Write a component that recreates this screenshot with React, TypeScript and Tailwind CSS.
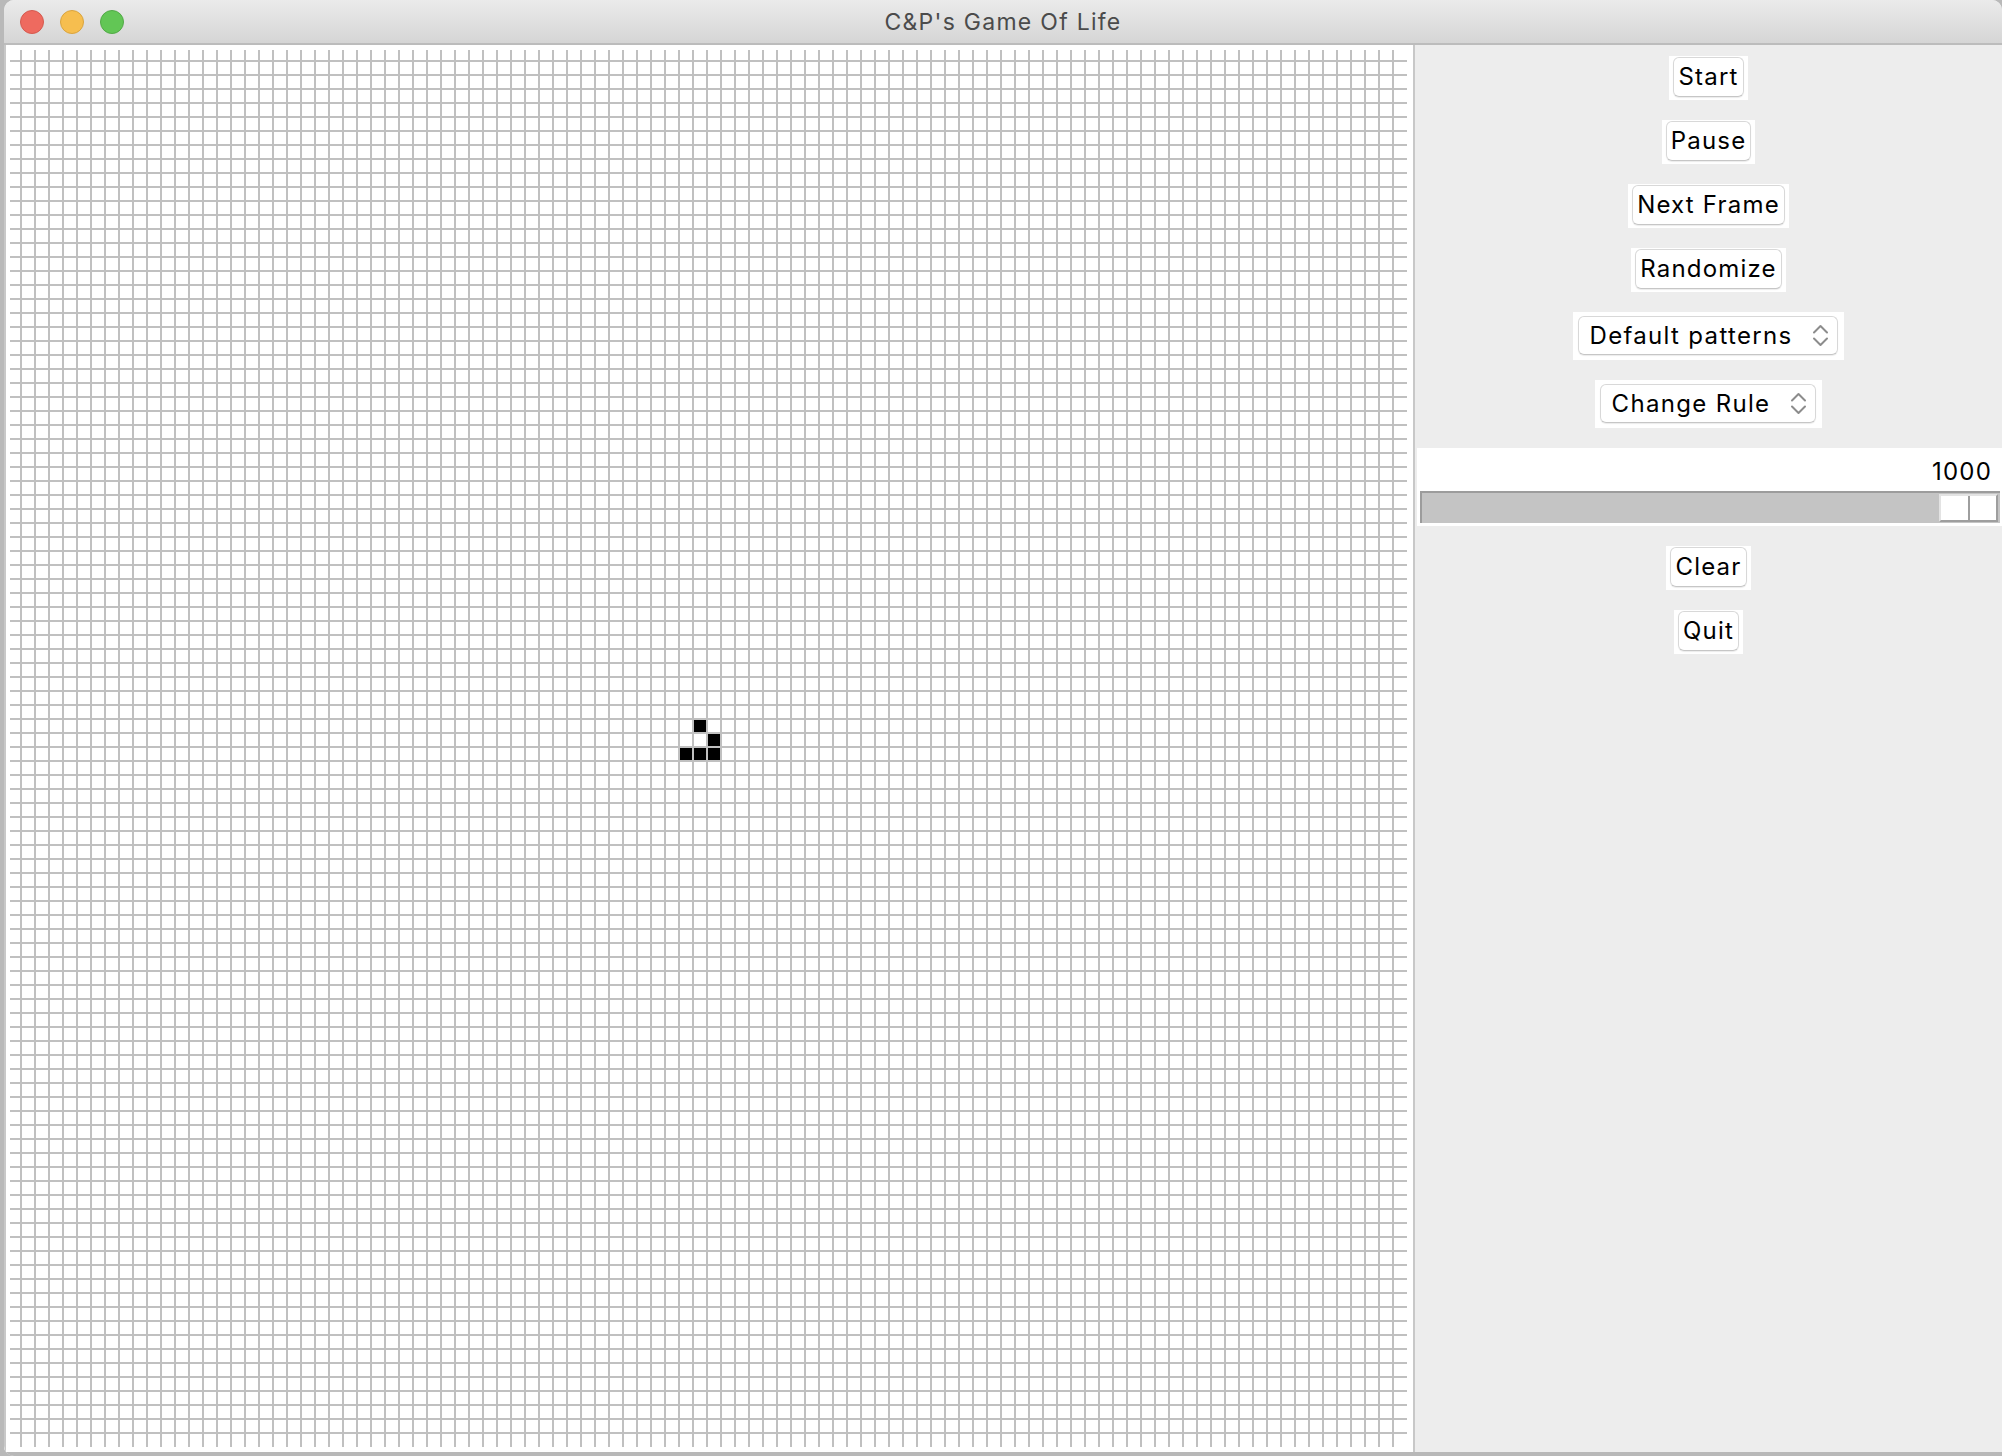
import React from 'react';

const CELL = 14;
const LINES = Array.from({ length: 99 }, (_, i) => i);

// live cells of the glider, as [col, row] in the grid
const GLIDER: [number, number][] = [
  [48, 47],
  [49, 48],
  [47, 49],
  [48, 49],
  [49, 49],
];

const font = "font-['Inter','Liberation_Sans',sans-serif]";

const LifeGrid: React.FC = () => (
  <svg width={1407} height={1407} className="block">
    {LINES.map((k) => (
      <rect key={`v${k}`} x={14 + k * CELL} y={5} width={2} height={1397} fill="#c0c0c0" />
    ))}
    {LINES.map((k) => (
      <rect key={`h${k}`} x={4} y={15 + k * CELL} width={1397} height={2} fill="#c0c0c0" />
    ))}
    {GLIDER.map(([c, r]) => (
      <rect key={`${c}-${r}`} x={16 + c * CELL} y={17 + r * CELL} width={12} height={12} fill="#000" />
    ))}
  </svg>
);

const PushButton: React.FC<{ label: string }> = ({ label }) => (
  <div className="bg-white pt-[1px] pb-[3px] px-[4px]">
    <div className="h-[40px] px-[4px] flex items-center rounded-[6px] border border-[#d8d8d8] border-b-[#c6c6c6] shadow-[0_1px_1px_rgba(0,0,0,0.08)] text-[24px] tracking-[0.05em] text-black leading-none">
      {label}
    </div>
  </div>
);

const Chevrons = () => (
  <svg width="17" height="25" viewBox="0 0 17 25" fill="none" stroke="#8c8c8c" strokeWidth="2" strokeLinecap="round" strokeLinejoin="round">
    <path d="M2 9.5 L8.5 3 L15 9.5" />
    <path d="M2 15.5 L8.5 22 L15 15.5" />
  </svg>
);

const Dropdown: React.FC<{ label: string }> = ({ label }) => (
  <div className="bg-white pt-[4px] pb-[5px] pl-[5px] pr-[6px]">
    <div className="h-[39px] pl-[11px] pr-[8px] gap-[20px] flex items-center rounded-[6px] border border-[#d8d8d8] border-b-[#c6c6c6] shadow-[0_1px_1px_rgba(0,0,0,0.08)] text-[24px] tracking-[0.055em] text-black leading-none">
      <span>{label}</span>
      <Chevrons />
    </div>
  </div>
);

const SpeedSlider: React.FC<{ value: number }> = ({ value }) => (
  <div className="self-stretch ml-[2px] bg-white h-[78px] pt-[10px] flex flex-col">
    <div className="h-[28px] leading-[28px] text-[24px] tracking-[0.05em] text-black text-right pr-[10px]">{value}</div>
    <div className="mt-[5px] ml-[3px] mr-[2px] h-[32px] bg-[#c4c4c4] border-t-2 border-l-2 border-[#9c9c9c] flex justify-end">
      <div className="w-[59px] h-[28px] mt-[1px] mr-[2px] bg-white border-2 border-t-[#e3e3e3] border-l-[#e3e3e3] border-b-[#9e9e9e] border-r-[#9e9e9e] flex justify-center">
        <div className="w-[2px] bg-[#9e9e9e]" />
      </div>
    </div>
  </div>
);

export default function App() {
  return (
    <div className={`w-[2002px] h-[1456px] flex bg-[#b9b9b9] overflow-hidden ${font}`}>
      <div className="w-[4px]" />
      <div className="flex-1 flex flex-col rounded-t-[10px] rounded-bl-[10px] overflow-hidden bg-[#ededed]">
        <div className="h-[45px] shrink-0 grid grid-cols-[1fr_auto_1fr] items-center bg-gradient-to-b from-[#ebebeb] to-[#d5d5d5] border-b-2 border-[#bcbcbc]">
          <div className="flex items-center gap-[16px] pl-[16px]">
            <div className="w-[24px] h-[24px] rounded-full bg-[#ee6a5f] border border-[#d45a4f]" />
            <div className="w-[24px] h-[24px] rounded-full bg-[#f6be4f] border border-[#d9a43f]" />
            <div className="w-[24px] h-[24px] rounded-full bg-[#62c655] border border-[#52a947]" />
          </div>
          <div className="pt-[2px] text-[23px] tracking-[0.055em] text-[#4b4b4b] leading-none">C&amp;P's Game Of Life</div>
          <div />
        </div>
        <div className="flex flex-1 border-b-[4px] border-[#b8b8b8]">
          <div className="bg-white border-l-2 border-r-2 border-[#c8c8c8]">
            <LifeGrid />
          </div>
          <div className="flex-1 flex flex-col items-center pt-[11px] gap-[20px]">
            <PushButton label="Start" />
            <PushButton label="Pause" />
            <PushButton label="Next Frame" />
            <PushButton label="Randomize" />
            <Dropdown label="Default patterns" />
            <Dropdown label="Change Rule" />
            <SpeedSlider value={1000} />
            <PushButton label="Clear" />
            <PushButton label="Quit" />
          </div>
        </div>
      </div>
    </div>
  );
}
